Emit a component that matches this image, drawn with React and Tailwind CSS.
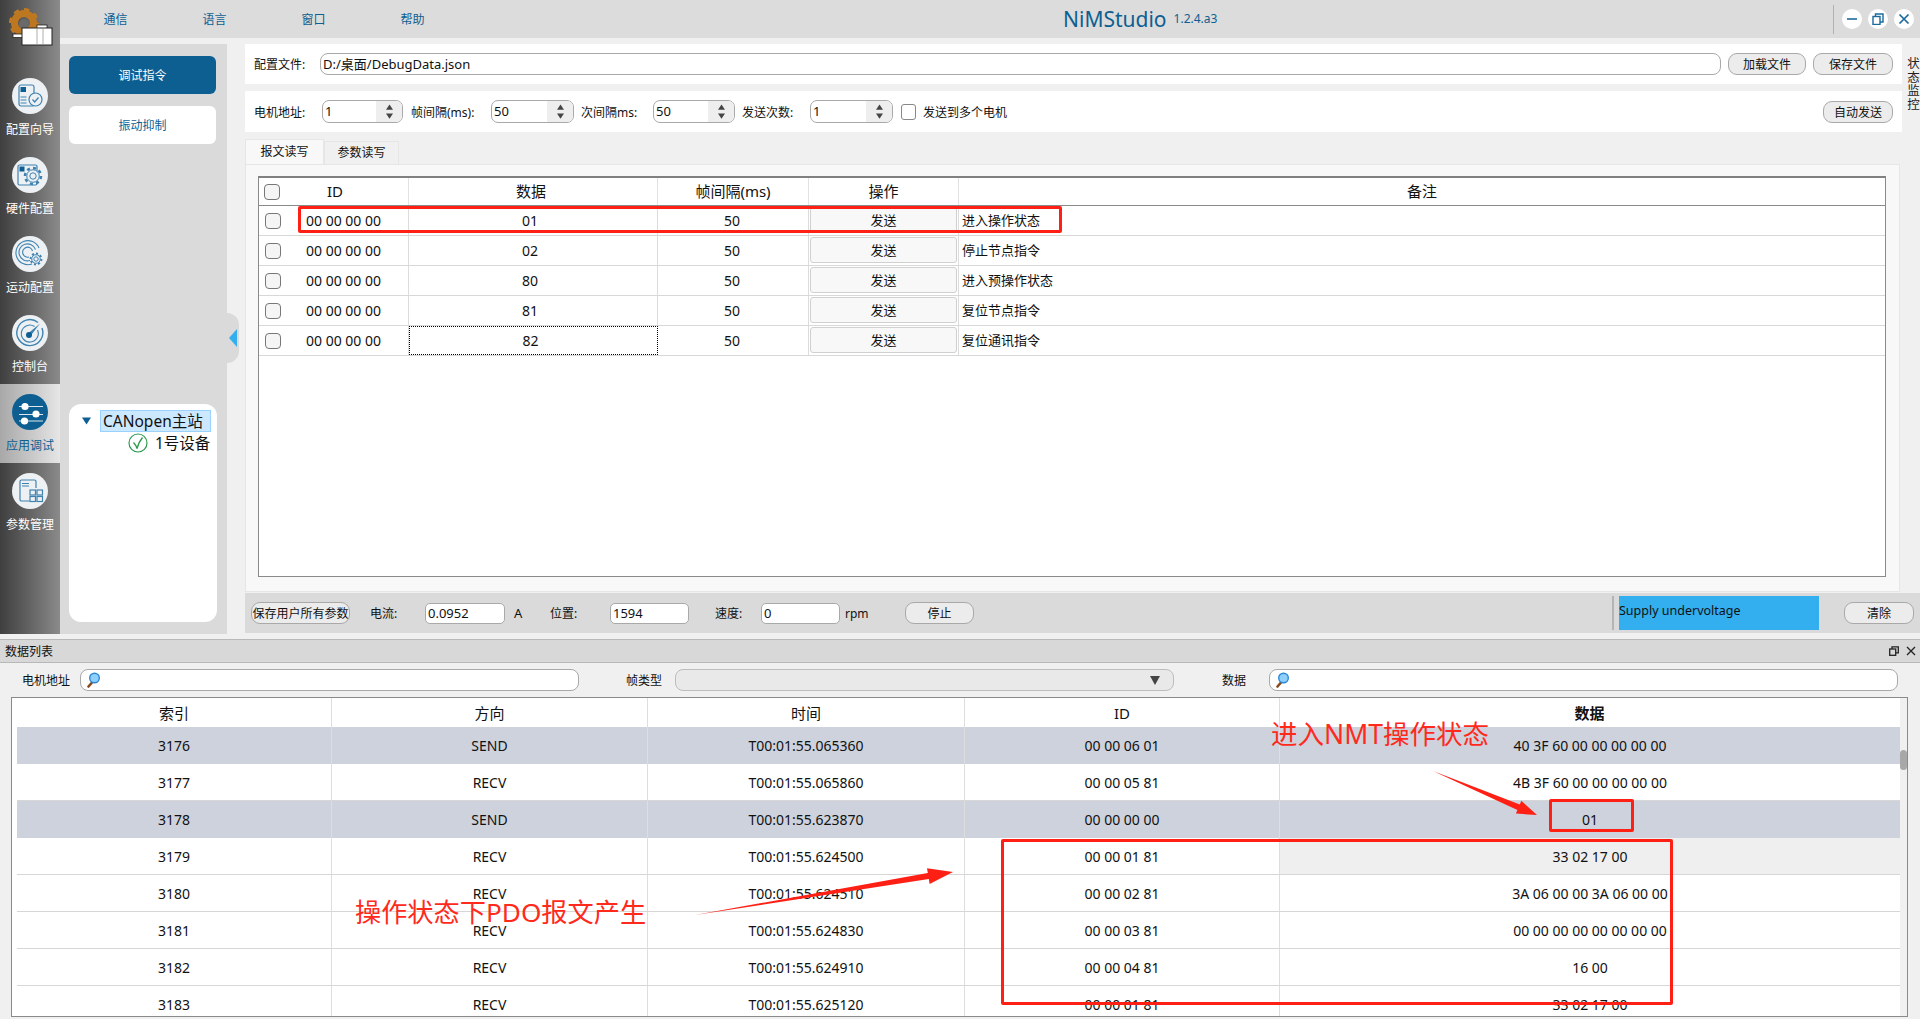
const BLUE = "#0d5f92";
const STROKE = "#3f82b0";

const Gear = ({ cx, cy, r, c = STROKE }) => (
  <g fill="none" stroke={c}>
    <circle cx={cx} cy={cy} r={r} strokeWidth={r * 0.32} pathLength="16" strokeDasharray="1 1" />
    <circle cx={cx} cy={cy} r={r * 0.78} strokeWidth="1" fill="#eef1f4" />
    <circle cx={cx} cy={cy} r={r * 0.4} strokeWidth="1" />
  </g>
);

const Doc = ({ w = 15 }) => (
  <>
    <rect x="7" y="7" width={w} height="21" rx="2" fill="none" stroke={STROKE} strokeWidth="1.2" />
    <rect x="8.5" y="9" width="5.5" height="5" fill={BLUE} />
  </>
);

function WizardIcon() {
  return (
    <svg viewBox="0 0 36 36" className="w-9 h-9">
      <Doc />
      <path d="M8.5 19h6M8.5 22h6M8.5 25h6" stroke={STROKE} strokeWidth="1" />
      <circle cx="23.5" cy="21.5" r="6.5" fill="#eef1f4" stroke={STROKE} strokeWidth="1.2" />
      <path d="M20.5 21.5l2.2 2.4 3.8-4.4" fill="none" stroke={STROKE} strokeWidth="1.3" />
    </svg>
  );
}

function HardwareIcon() {
  return (
    <svg viewBox="0 0 36 36" className="w-9 h-9">
      <rect x="6" y="8" width="19" height="20" rx="1.5" fill="none" stroke={STROKE} strokeWidth="1.2" />
      <rect x="7.5" y="9.5" width="5" height="5" fill={BLUE} />
      <Gear cx={21} cy={19} r={8} />
    </svg>
  );
}

function MotionIcon() {
  return (
    <svg viewBox="0 0 36 36" className="w-9 h-9">
      <g fill="none" stroke={STROKE} strokeWidth="1.1">
        <path d="M20 28A12 12 0 1 1 27 12" />
        <path d="M18 24.5A8.5 8.5 0 1 1 23.5 13.5" />
        <path d="M17 21A5 5 0 1 1 20.5 15" />
      </g>
      <Gear cx={24} cy={23} r={5.5} />
    </svg>
  );
}

function GaugeIcon() {
  return (
    <svg viewBox="0 0 36 36" className="w-9 h-9">
      <path d="M26 7.5A13 13 0 1 0 30 13" fill="none" stroke={STROKE} strokeWidth="1.4" />
      <path d="M22.5 11.5A8.5 8.5 0 1 0 25.5 15" fill="none" stroke={STROKE} strokeWidth="1.1" />
      <path d="M16 18.5l12-10-9.5 12.5z" fill={STROKE} />
      <circle cx="17" cy="20" r="3" fill={BLUE} />
    </svg>
  );
}

function SlidersIcon() {
  return (
    <svg viewBox="0 0 36 36" className="w-9 h-9">
      <g stroke="#fff" strokeWidth="1">
        <path d="M7 12.5h24M7 20.5h24M7 27h24" opacity="0.85" />
      </g>
      <circle cx="13" cy="12.5" r="3.6" fill="#fff" />
      <circle cx="24" cy="20" r="3.6" fill="#fff" />
      <circle cx="12.5" cy="27" r="3.6" fill="#fff" />
    </svg>
  );
}

function ParamsIcon() {
  return (
    <svg viewBox="0 0 36 36" className="w-9 h-9">
      <path d="M24 15V8.5a1.5 1.5 0 0 0-1.5-1.5h-13A1.5 1.5 0 0 0 8 8.5v18A1.5 1.5 0 0 0 9.500 28h8" fill="none" stroke={STROKE} strokeWidth="1.2" />
      <path d="M10 10.500h7M10 13h7" stroke={STROKE} strokeWidth="1" />
      <g fill="none" stroke={STROKE} strokeWidth="1.2">
        <rect x="18" y="17" width="5.5" height="5" />
        <rect x="25" y="17" width="5.5" height="5" />
        <rect x="18" y="23.500" width="5.5" height="5" />
        <rect x="25" y="23.500" width="5.5" height="5" />
      </g>
    </svg>
  );
}

function Logo() {
  return (
    <svg viewBox="0 0 60 48" className="w-[60px] h-12">
      <circle cx="24" cy="22" r="13" fill="none" stroke="#c27a23" strokeWidth="4" pathLength="16" strokeDasharray="1 1" />
      <circle cx="24" cy="22" r="9.500" fill="none" stroke="#bd7720" strokeWidth="7" />
      <circle cx="24" cy="23" r="5" fill="#6a6a6a" />
      <rect x="13" y="33" width="10" height="3.500" fill="#fff" stroke="#222" strokeWidth="0.8" />
      <rect x="37" y="24" width="10" height="4" fill="#fff" stroke="#222" strokeWidth="0.8" />
      <rect x="22" y="27" width="30" height="17" fill="#fff" stroke="#222" strokeWidth="1" />
      <path d="M37 27v17M43 27v17" stroke="#999" strokeWidth="0.8" />
    </svg>
  );
}

const navItems = [
  { label: "配置向导", icon: <WizardIcon /> },
  { label: "硬件配置", icon: <HardwareIcon /> },
  { label: "运动配置", icon: <MotionIcon /> },
  { label: "控制台", icon: <GaugeIcon /> },
  { label: "应用调试", icon: <SlidersIcon />, active: true },
  { label: "参数管理", icon: <ParamsIcon /> },
];

function Sidebar() {
  return (
    <div className="w-[60px] h-[634px] shrink-0 flex flex-col bg-gradient-to-r from-[#3f3f3f] to-[#8b8b8b]">
      <div className="h-[68px] pt-[1px]">
        <Logo />
      </div>
      {navItems.map((item) => (
        <div
          key={item.label}
          className={
            item.active
              ? "h-[79px] flex flex-col items-center pt-[10px] bg-gradient-to-r from-[#a8a8a8] to-[#e6e6e6]"
              : "h-[79px] flex flex-col items-center pt-[10px]"
          }
        >
          <div className={item.active ? "w-9 h-9 rounded-full bg-[#0d5f92]" : "w-9 h-9 rounded-full bg-[#eef1f4]"}>
            {item.icon}
          </div>
          <div className={item.active ? "mt-[7px] text-[12px] leading-[18px] text-[#0d5f92]" : "mt-[7px] text-[12px] leading-[18px] text-white"}>
            {item.label}
          </div>
        </div>
      ))}
    </div>
  );
}

function TopBar() {
  return (
    <div className="h-[38px] shrink-0 bg-[#dcdcdc] flex items-center pl-[6px]">
      {["通信", "语言", "窗口", "帮助"].map((m) => (
        <div key={m} className="w-[99px] pt-[2px] text-center text-[12px] text-[#0d5f92]">
          {m}
        </div>
      ))}
      <div className="ml-[601px] text-[21px] leading-none text-[#0d5f92]">NiMStudio</div>
      <div className="ml-[7px] text-[12px] text-[#0d5f92]">1.2.4.a3</div>
      <div className="ml-auto w-[1px] h-[29px] bg-[#b0b0b0]" />
      <div className="ml-[8px] flex gap-[6px] mr-[6px]">
        <button className="w-5 h-5 rounded-full bg-white flex items-center justify-center">
          <svg viewBox="0 0 12 12" className="w-3 h-3"><path d="M1 6h10" stroke="#1a6a9e" strokeWidth="1.6" /></svg>
        </button>
        <button className="w-5 h-5 rounded-full bg-white flex items-center justify-center">
          <svg viewBox="0 0 12 12" className="w-3 h-3" fill="none" stroke="#1a6a9e" strokeWidth="1.4"><rect x="1" y="3.500" width="7" height="8" /><path d="M3.500 3V1h7.500v8H8" /></svg>
        </button>
        <button className="w-5 h-5 rounded-full bg-white flex items-center justify-center">
          <svg viewBox="0 0 12 12" className="w-3 h-3"><path d="M1.500 1.500l9 9M10.500 1.500l-9 9" stroke="#1a6a9e" strokeWidth="1.7" /></svg>
        </button>
      </div>
    </div>
  );
}

function Tree() {
  return (
    <div className="mt-[260px] w-[148px] h-[218px] bg-white rounded-xl pt-[6px] text-[15.5px] leading-[22px] text-[#111]">
      <div className="flex items-center h-[22px]">
        <svg viewBox="0 0 10 8" className="ml-[13px] w-[9px] h-[8px]"><path d="M0 0h10L5 8z" fill={BLUE} /></svg>
        <div className="ml-[9px] w-[111px] h-[22px] bg-[#cce8ff] border border-[#99d1ff] pl-[2px] leading-[20px] whitespace-nowrap">CANopen主站</div>
      </div>
      <div className="flex items-center h-[22px]">
        <svg viewBox="0 0 20 20" className="ml-[59px] w-[20px] h-[20px]">
          <circle cx="10" cy="10" r="9" fill="none" stroke="#2e9b4f" strokeWidth="1.2" />
          <path d="M5.500 9.500c1.500 1.500 3 4 3.500 6 1-4 3-8 5.500-11" fill="none" stroke="#2e9b4f" strokeWidth="1.400" />
        </svg>
        <div className="ml-[7px] whitespace-nowrap">1号设备</div>
      </div>
    </div>
  );
}

function LeftPanel() {
  return (
    <div className="w-[167px] h-full shrink-0 bg-[#dadada] pl-[9px] pt-[12px]">
      <div className="w-[147px] h-[38px] pt-[2px] rounded-md bg-[#0d5f92] text-white text-[12px] flex items-center justify-center">调试指令</div>
      <div className="mt-[12px] w-[147px] h-[38px] pt-[2px] rounded-md bg-white text-[#0d5f92] text-[12px] flex items-center justify-center">振动抑制</div>
      <Tree />
    </div>
  );
}

function PillButton({ className, children }) {
  return (
    <button className={"h-[22px] pt-[2px] rounded-[9px] border border-[#a9a9a9] bg-[#ececec] text-[12px] text-[#111] flex items-center justify-center whitespace-nowrap " + className}>
      {children}
    </button>
  );
}

function Spin({ value, w }) {
  return (
    <div className={"h-[23px] rounded-[7px] border border-[#a9a9a9] bg-white flex overflow-hidden shrink-0 " + w}>
      <div className="flex-1 pl-[2px] text-[13px] leading-[21px] text-[#111]">{value}</div>
      <div className="w-[26px] bg-[#eeeeee] flex flex-col items-center justify-around py-[2px]">
        <svg viewBox="0 0 8 6" className="w-[7px] h-[6px]"><path d="M4 0l4 6H0z" fill="#444" /></svg>
        <svg viewBox="0 0 8 6" className="w-[7px] h-[6px]"><path d="M0 0h8L4 6z" fill="#444" /></svg>
      </div>
    </div>
  );
}

const Label = ({ className, children }) => (
  <div className={"pt-[2px] text-[12px] text-[#111] whitespace-nowrap shrink-0 " + className}>{children}</div>
);

function ConfigRows() {
  return (
    <>
      <div className="h-[40px] bg-white flex items-center pl-[9px] pr-[9px]">
        <Label className="w-[66px]">配置文件:</Label>
        <div className="flex-1 h-[22px] rounded-[8px] border border-[#a9a9a9] pl-[2px] text-[13px] leading-[21px] text-[#111]">D:/桌面/DebugData.json</div>
        <PillButton className="ml-[7px] w-[78px]">加载文件</PillButton>
        <PillButton className="ml-[7px] w-[80px]">保存文件</PillButton>
      </div>
      <div className="mt-[7px] h-[41px] bg-white flex items-center pl-[9px] pr-[9px]">
        <Label className="w-[68px]">电机地址:</Label>
        <Spin value="1" w="w-[81px]" />
        <Label className="ml-[8px] w-[80px]">帧间隔(ms):</Label>
        <Spin value="50" w="w-[83px]" />
        <Label className="ml-[7px] w-[72px]">次间隔ms:</Label>
        <Spin value="50" w="w-[82px]" />
        <Label className="ml-[7px] w-[68px]">发送次数:</Label>
        <Spin value="1" w="w-[83px]" />
        <div className="ml-[8px] w-[15px] h-[16px] rounded-[3px] border border-[#888] bg-white" />
        <Label className="ml-[7px]">发送到多个电机</Label>
        <PillButton className="ml-auto w-[70px]">自动发送</PillButton>
      </div>
    </>
  );
}

const cmdRows = [
  { data: "01", note: "进入操作状态" },
  { data: "02", note: "停止节点指令" },
  { data: "80", note: "进入预操作状态" },
  { data: "81", note: "复位节点指令" },
  { data: "82", note: "复位通讯指令", focus: true },
];

function CmdTable() {
  return (
    <div className="w-[1628px] h-[401px] bg-white border-x border-b border-[#8a8a8a] border-t-2 border-t-[#808080] overflow-hidden">
      <div className="flex h-[28px] border-b border-[#8a8a8a] text-[15px] text-[#111]">
        <div className="w-[150px] flex items-center border-r border-[#e2e2e2]">
          <div className="ml-[5px] w-[16px] h-[16px] rounded-[4px] border border-[#777] bg-[#f5f5f5]" />
          <div className="ml-[47px]">ID</div>
        </div>
        <div className="w-[249px] flex items-center justify-center border-r border-[#e2e2e2] pr-[4px]">数据</div>
        <div className="w-[151px] flex items-center justify-center border-r border-[#e2e2e2]">帧间隔(ms)</div>
        <div className="w-[150px] flex items-center justify-center border-r border-[#e2e2e2]">操作</div>
        <div className="flex-1 flex items-center justify-center">备注</div>
      </div>
      {cmdRows.map((r) => (
        <div key={r.data} className="flex h-[30px] border-b border-[#d8d8d8] text-[14px] text-[#111]">
          <div className="w-[150px] flex items-center border-r border-[#dcdcdc]">
            <div className="ml-[6px] w-[16px] h-[16px] rounded-[4px] border border-[#777] bg-[#f5f5f5]" />
            <div className="ml-[25px] whitespace-nowrap">00 00 00 00</div>
          </div>
          <div className={r.focus ? "w-[249px] flex items-center justify-center border border-dotted border-black pr-[6px]" : "w-[249px] flex items-center justify-center border-r border-[#dcdcdc] pr-[6px]"}>
            {r.data}
          </div>
          <div className="w-[151px] flex items-center justify-center border-r border-[#dcdcdc] pr-[2px]">50</div>
          <div className="w-[150px] border-r border-[#dcdcdc] pl-[1px] pr-[1px] pt-[1px] pb-[2px]">
            <div className="h-full pt-[2px] rounded-[3px] border border-[#d0d0d0] bg-[#f8f8f8] text-[13px] flex items-center justify-center">发送</div>
          </div>
          <div className="flex-1 flex items-center pl-[3px] text-[13px]">{r.note}</div>
        </div>
      ))}
    </div>
  );
}

function StatusBar() {
  const field = "h-[21px] rounded-[5px] border border-[#a9a9a9] bg-white pl-[2px] text-[13px] leading-[19px] text-[#111] shrink-0";
  return (
    <div className="mt-[1px] h-[40px] shrink-0 bg-[#dadada] flex items-center pl-[6px] pr-[6px]">
      <PillButton className="w-[99px]">保存用户所有参数</PillButton>
      <Label className="ml-[20px] w-[55px]">电流:</Label>
      <div className={field + " w-[80px]"}>0.0952</div>
      <Label className="ml-[9px] w-[36px] text-[13px]">A</Label>
      <Label className="w-[60px]">位置:</Label>
      <div className={field + " w-[79px]"}>1594</div>
      <Label className="ml-[26px] w-[46px]">速度:</Label>
      <div className={field + " w-[79px]"}>0</div>
      <Label className="ml-[5px] w-[60px]">rpm</Label>
      <PillButton className="w-[69px]">停止</PillButton>
      <div className="ml-auto w-[2px] h-[34px] bg-[#b4b4b4]" />
      <div className="ml-[5px] w-[200px] h-[34px] bg-[#33aeee] text-[12.5px] text-[#111] flex items-start pt-[6px]">Supply undervoltage</div>
      <PillButton className="ml-[25px] w-[70px]">清除</PillButton>
    </div>
  );
}

function MainArea() {
  return (
    <div className="flex-1 min-w-0 flex flex-col">
      <div className="flex h-[548px] shrink-0">
        <div className="w-[1657px] shrink-0 flex flex-col">
          <ConfigRows />
          <div className="mt-[7px] h-[25px] flex items-end text-[12px] text-[#111]">
            <div className="w-[79px] h-[25px] bg-[#f8f8f8] border border-b-0 border-[#e6e6e6] flex items-center justify-center">报文读写</div>
            <div className="w-[75px] h-[23px] border border-b-0 border-[#e6e6e6] flex items-center justify-center">参数读写</div>
          </div>
          <div className="w-[1655px] h-[428px] bg-[#f8f8f8] border border-[#e6e6e6] pl-[12px] pt-[11px]">
            <CmdTable />
          </div>
        </div>
        <div className="w-[18px] pt-[13px] pl-[3px] overflow-hidden">
          <div className="h-[60px] w-[14px] text-[12.5px] leading-[14px] tracking-[1px] text-[#222] [writing-mode:vertical-rl]">状态监控</div>
        </div>
      </div>
      <StatusBar />
    </div>
  );
}

function Magnifier() {
  return (
    <svg viewBox="0 0 14 16" className="w-[14px] h-[16px] shrink-0">
      <path d="M6 10.500L2.500 14.500" stroke="#8a4b1c" strokeWidth="2.600" strokeLinecap="round" />
      <circle cx="8.500" cy="6" r="4.800" fill="#8fd0fb" stroke="#2c88d6" strokeWidth="1.400" />
    </svg>
  );
}

function SearchBox({ w }) {
  return (
    <div className={"h-[22px] rounded-[8px] border border-[#a9a9a9] bg-white flex items-center pl-[5px] shrink-0 " + w}>
      <Magnifier />
    </div>
  );
}

function FilterRow() {
  return (
    <div className="h-[34px] shrink-0 flex items-center pl-[22px]">
      <Label className="w-[58px]">电机地址</Label>
      <SearchBox w="w-[499px]" />
      <Label className="ml-[47px] w-[49px]">帧类型</Label>
      <div className="w-[499px] h-[22px] rounded-[8px] border border-[#bdbdbd] bg-[#e9e9e9] flex items-center justify-end pr-[13px] shrink-0">
        <svg viewBox="0 0 10 9" className="w-[10px] h-[9px]"><path d="M0 0h10L5 9z" fill="#444" /></svg>
      </div>
      <Label className="ml-[48px] w-[47px]">数据</Label>
      <SearchBox w="w-[629px]" />
    </div>
  );
}

const logRows = [
  ["3176", "SEND", "T00:01:55.065360", "00 00 06 01", "40 3F 60 00 00 00 00 00"],
  ["3177", "RECV", "T00:01:55.065860", "00 00 05 81", "4B 3F 60 00 00 00 00 00"],
  ["3178", "SEND", "T00:01:55.623870", "00 00 00 00", "01"],
  ["3179", "RECV", "T00:01:55.624500", "00 00 01 81", "33 02 17 00"],
  ["3180", "RECV", "T00:01:55.624510", "00 00 02 81", "3A 06 00 00 3A 06 00 00"],
  ["3181", "RECV", "T00:01:55.624830", "00 00 03 81", "00 00 00 00 00 00 00 00"],
  ["3182", "RECV", "T00:01:55.624910", "00 00 04 81", "16 00"],
  ["3183", "RECV", "T00:01:55.625120", "00 00 01 81", "33 02 17 00"],
];

const logCols = ["w-[315px]", "w-[316px]", "w-[317px]", "w-[315px]"];

function LogTable() {
  return (
    <div className="ml-[11px] w-[1897px] h-[320px] shrink-0 bg-white border border-[#8a8a8a] flex overflow-hidden">
      <div className="w-[5px] shrink-0" />
      <div className="flex-1 min-w-0">
        <div className="flex h-[29px] text-[15px] text-[#111]">
          {["索引", "方向", "时间", "ID"].map((h, i) => (
            <div key={h} className={"flex items-center justify-center pt-[2px] border-r border-[#dedede] " + logCols[i]}>{h}</div>
          ))}
          <div className="flex-1 flex items-center justify-center pt-[2px] font-semibold pr-[1px]">数据</div>
        </div>
        {logRows.map((r) => {
          const sent = r[1] === "SEND";
          return (
            <div key={r[0]} className={sent ? "flex h-[37px] bg-[#ced2dc] text-[14px] text-[#111]" : "flex h-[37px] border-b border-[#d6d6d6] text-[14px] text-[#111]"}>
              {r.slice(0, 4).map((c, i) => (
                <div key={i} className={"flex items-center justify-center border-r border-[#dedede] " + logCols[i]}>{c}</div>
              ))}
              <div className={r[0] === "3179" ? "flex-1 flex items-center justify-center bg-[#efefef]" : "flex-1 flex items-center justify-center"}>{r[4]}</div>
            </div>
          );
        })}
      </div>
      <div className="w-[7px] shrink-0 bg-[#f0f0f0] pt-[52px]">
        <div className="h-[20px] bg-[#a8a8a8] rounded-full" />
      </div>
    </div>
  );
}

function Annotations() {
  return (
    <>
      <div className="absolute left-[298px] top-[206px] w-[764px] h-[27px] border-[3px] border-[#ff2015] rounded-[2px]" />
      <div className="absolute left-[1549px] top-[799px] w-[85px] h-[33px] border-[3px] border-[#ff2015] rounded-[2px]" />
      <div className="absolute left-[1001px] top-[839px] w-[672px] h-[166px] border-[3px] border-[#ff2015] rounded-[2px]" />
      <div className="absolute left-[1271px] top-[716px] text-[26.5px] leading-[36px] text-[#ff2a1c] whitespace-nowrap">进入NMT操作状态</div>
      <div className="absolute left-[355px] top-[894px] text-[26.2px] leading-[36px] text-[#ff2a1c] whitespace-nowrap">操作状态下PDO报文产生</div>
      <svg className="absolute left-0 top-0 w-[1920px] h-[1019px] pointer-events-none" viewBox="0 0 1920 1019">
        <polygon points="1433,771 1519.800,804.400 1521.300,800.800 1537,815 1515.900,813.600 1517.400,810" fill="#ff2015" />
        <polygon points="695,915 927.800,873.100 927,868.200 953,872 929.600,884 928.800,879.100" fill="#ff2015" />
      </svg>
    </>
  );
}

export default function App() {
  return (
    <div className="relative w-[1920px] h-[1019px] overflow-hidden bg-[#f0f0f0] flex flex-col font-['Noto_Sans','Noto_Sans_CJK_SC',sans-serif]">
      <div className="flex h-[634px] shrink-0">
        <Sidebar />
        <div className="flex-1 min-w-0 flex flex-col">
          <TopBar />
          <div className="flex-1 min-h-0 pt-[6px] flex">
            <LeftPanel />
            <div className="w-[12px] h-[50px] mt-[269px] shrink-0 bg-[#dadada] rounded-r-xl flex items-center">
              <svg viewBox="0 0 8 18" className="ml-[2px] w-[8px] h-[18px]"><path d="M8 0v18L0 9z" fill="#33aeee" /></svg>
            </div>
            <div className="w-[6px] shrink-0" />
            <MainArea />
          </div>
        </div>
      </div>
      <div className="mt-[5px] h-[24px] shrink-0 bg-[#d8d8d8] border-y border-[#b8b8b8] flex items-center pl-[5px] pr-[4px]">
        <div className="pt-[2px] text-[12px] text-[#111]">数据列表</div>
        <svg viewBox="0 0 10 10" className="ml-auto w-[10px] h-[10px]" fill="none" stroke="#222" strokeWidth="1.300"><rect x="0.700" y="3" width="6" height="6.300" /><path d="M3 3V0.800h6.300v6H7" /></svg>
        <svg viewBox="0 0 10 10" className="ml-[7px] w-[10px] h-[10px]"><path d="M1 1l8 8M9 1l-8 8" stroke="#222" strokeWidth="1.300" /></svg>
      </div>
      <FilterRow />
      <LogTable />
      <Annotations />
    </div>
  );
}
